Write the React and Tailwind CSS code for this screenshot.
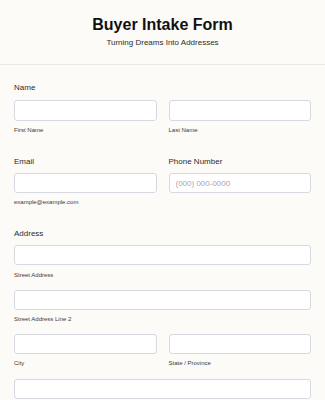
import React from "react";

const inputCls =
  "block w-full h-[20px] rounded-[3px] border border-[#d7d9e1] bg-white px-[6px] text-[8px] text-[#2c2c2c] outline-none placeholder:text-[#a5a7ad]";

function FieldLabel({ children, gap = "mb-[5px]" }) {
  return <div className={"text-[8px] leading-[12px] text-[#2c2c2c] " + gap}>{children}</div>;
}

function SubLabel({ children, gap = "mt-[5px]" }) {
  return <div className={"text-[6px] leading-[8px] text-[#3a3a3a] " + gap}>{children}</div>;
}

export default function App() {
  return (
    <div
      className="w-[325px] h-[400px] overflow-hidden bg-[#fcfbf8]"
      style={{ fontFamily: '"Liberation Sans", Arial, sans-serif' }}
    >
      {/* Header */}
      <div className="pt-[15px] pb-[16px] text-center border-b border-[#ebeae6]">
        <h1 className="text-[16px] leading-[20px] font-bold text-[#111111]">Buyer Intake Form</h1>
        <p className="mt-[3px] text-[8px] leading-[10px] text-[#2c2c2c]">Turning Dreams Into Addresses</p>
      </div>

      {/* Form */}
      <div className="px-[14px] pt-[17px]">
        {/* Name */}
        <div>
          <FieldLabel gap="mb-[6px]">Name</FieldLabel>
          <div className="grid grid-cols-2 gap-[12px]">
            <div>
              <input className={inputCls + " h-[21px]"} />
              <SubLabel>First Name</SubLabel>
            </div>
            <div>
              <input className={inputCls + " h-[21px]"} />
              <SubLabel>Last Name</SubLabel>
            </div>
          </div>
        </div>

        {/* Email / Phone */}
        <div className="grid grid-cols-2 gap-[12px] mt-[22px]">
          <div>
            <FieldLabel>Email</FieldLabel>
            <input className={inputCls} />
            <SubLabel>example@example.com</SubLabel>
          </div>
          <div>
            <FieldLabel>Phone Number</FieldLabel>
            <input className={inputCls} placeholder="(000) 000-0000" />
          </div>
        </div>

        {/* Address */}
        <div className="mt-[22px]">
          <FieldLabel>Address</FieldLabel>
          <input className={inputCls} />
          <SubLabel gap="mt-[6px]">Street Address</SubLabel>

          <div className="mt-[11px]">
            <input className={inputCls} />
            <SubLabel>Street Address Line 2</SubLabel>
          </div>

          <div className="grid grid-cols-2 gap-[12px] mt-[11px]">
            <div>
              <input className={inputCls} />
              <SubLabel>City</SubLabel>
            </div>
            <div>
              <input className={inputCls} />
              <SubLabel>State / Province</SubLabel>
            </div>
          </div>

          <div className="mt-[12px]">
            <input className={inputCls} />
          </div>
        </div>
      </div>
    </div>
  );
}
